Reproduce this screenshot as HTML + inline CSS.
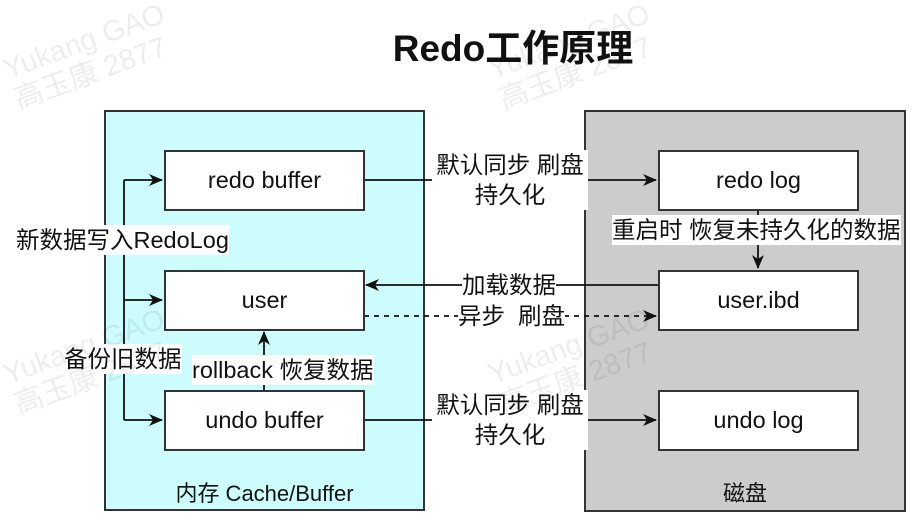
<!DOCTYPE html>
<html><head><meta charset="utf-8"><style>
body{margin:0;width:922px;height:527px;background:#fff;overflow:hidden;position:relative;font-family:"Liberation Sans","Noto Sans CJK SC",sans-serif;}
.a{position:absolute}
.box{position:absolute;background:#fff;border:2px solid #333;box-sizing:border-box;width:201px;height:61px;display:flex;align-items:center;justify-content:center;font-size:23.5px;color:#111}
.lbl{position:absolute;background:#fff;font-size:23.5px;color:#111;line-height:30px;text-align:center;white-space:nowrap}
.wm{position:absolute;color:rgba(0,0,0,0.07);font-size:29px;transform:rotate(-20deg);line-height:32px;white-space:nowrap}
</style></head><body>
<div class="a" style="left:104px;top:110px;width:321px;height:401px;background:#ccfcfc;border:2px solid #333;box-sizing:border-box"></div>
<div class="a" style="left:584px;top:110px;width:322px;height:402px;background:#cccccc;border:2px solid #333;box-sizing:border-box"></div>
<div class="a" style="left:0;top:18px;width:1026px;text-align:center;font-weight:bold;font-size:37px;color:#111">Redo工作原理</div>
<svg class="a" style="left:0;top:0" width="922" height="527">
<defs><marker id="m" viewBox="0 0 14 12" refX="13" refY="6" markerWidth="14" markerHeight="12" markerUnits="userSpaceOnUse" orient="auto"><path d="M0,0 L14,6 L0,12 L4,6z" fill="#111"/></marker></defs>
<g stroke="#111" stroke-width="1.8" fill="none">
<path d="M124,180 V420"/>
<path d="M124,180 H162" marker-end="url(#m)"/>
<path d="M124,300 H162" marker-end="url(#m)"/>
<path d="M124,420 H162" marker-end="url(#m)"/>
<path d="M264,390 V332" marker-end="url(#m)"/>
<path d="M364,180 H656" marker-end="url(#m)"/>
<path d="M658,285 H366" marker-end="url(#m)"/>
<path d="M364,316 H656" stroke-dasharray="5,5" marker-end="url(#m)"/>
<path d="M364,420 H656" marker-end="url(#m)"/>
<path d="M758,210 V268" marker-end="url(#m)"/>
</g></svg>
<div class="box" style="left:164px;top:150px">redo buffer</div>
<div class="box" style="left:164px;top:270px">user</div>
<div class="box" style="left:164px;top:390px">undo buffer</div>
<div class="box" style="left:658px;top:150px">redo log</div>
<div class="box" style="left:658px;top:270px">user.ibd</div>
<div class="box" style="left:658px;top:390px">undo log</div>
<div class="lbl" style="left:16px;top:225px">新数据写入RedoLog</div>
<div class="lbl" style="left:64px;top:344px">备份旧数据</div>
<div class="lbl" style="left:192px;top:355px">rollback 恢复数据</div>
<div class="lbl" style="left:432px;top:150px;width:156px">默认同步 刷盘<br>持久化</div>
<div class="lbl" style="left:432px;top:390px;width:156px">默认同步 刷盘<br>持久化</div>
<div class="lbl" style="left:462px;top:270px">加载数据</div>
<div class="lbl" style="left:458px;top:301px">异步&nbsp; 刷盘</div>
<div class="lbl" style="left:612px;top:215px">重启时 恢复未持久化的数据</div>
<div class="a" style="left:104px;top:476px;width:321px;text-align:center;font-size:22px;color:#111">内存 Cache/Buffer</div>
<div class="a" style="left:584px;top:476px;width:322px;text-align:center;font-size:22px;color:#111">磁盘</div>
<div class="wm" style="left:5px;top:25px">Yukang GAO<br>高玉康 2877</div>
<div class="wm" style="left:490px;top:25px">Yukang GAO<br>高玉康 2877</div>
<div class="wm" style="left:5px;top:330px">Yukang GAO<br>高玉康 2877</div>
<div class="wm" style="left:490px;top:330px">Yukang GAO<br>高玉康 2877</div>
</body></html>
